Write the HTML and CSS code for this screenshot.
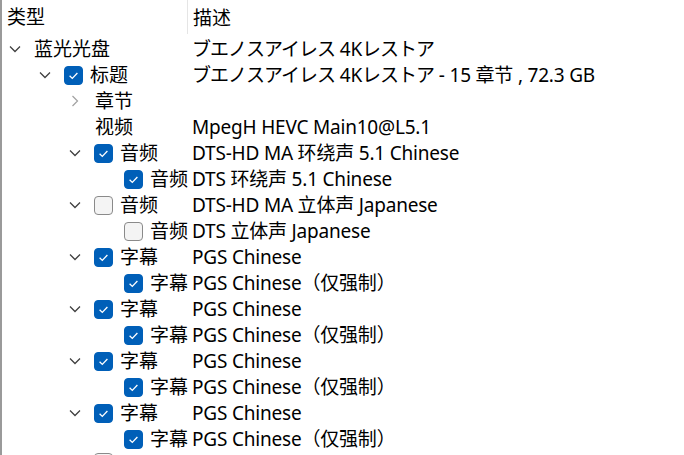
FILE: index.html
```html
<!DOCTYPE html>
<html lang="zh">
<head>
<meta charset="utf-8">
<link rel="stylesheet" href="styles.css">
</head>
<body>
<div class="view">
  <div class="header">
    <div class="hcell tree-col">类型</div>
    <div class="hcell desc-col">描述</div>
  </div>

  <div class="row l0">
    <div class="tree"><span class="chev down"><svg viewBox="0 0 12 8"><path d="M1 1.5 L6 6.5 L11 1.5"/></svg></span><span class="label">蓝光光盘</span></div>
    <div class="desc"><span class="kana">ブエノスアイレス</span> 4K<span class="kana">レストア</span></div>
  </div>
  <div class="row l1">
    <div class="tree"><span class="chev down"><svg viewBox="0 0 12 8"><path d="M1 1.5 L6 6.5 L11 1.5"/></svg></span><span class="cb on"><svg viewBox="0 0 19 19"><path d="M5.6 9.8 L8.3 12.4 L13.4 7"/></svg></span><span class="label">标题</span></div>
    <div class="desc"><span class="kana">ブエノスアイレス</span> 4K<span class="kana">レストア</span> - 15 章节 , 72.3 GB</div>
  </div>
  <div class="row l2">
    <div class="tree"><span class="chev right"><svg viewBox="0 0 8 12"><path d="M1.5 1 L6.5 6 L1.5 11"/></svg></span><span class="label nocb">章节</span></div>
    <div class="desc"></div>
  </div>
  <div class="row l2">
    <div class="tree"><span class="chev"></span><span class="label nocb">视频</span></div>
    <div class="desc">MpegH HEVC Main10@L5.1</div>
  </div>
  <div class="row l2">
    <div class="tree"><span class="chev down"><svg viewBox="0 0 12 8"><path d="M1 1.5 L6 6.5 L11 1.5"/></svg></span><span class="cb on"><svg viewBox="0 0 19 19"><path d="M5.6 9.8 L8.3 12.4 L13.4 7"/></svg></span><span class="label">音频</span></div>
    <div class="desc">DTS-HD MA 环绕声 5.1 Chinese</div>
  </div>
  <div class="row l3">
    <div class="tree"><span class="chev"></span><span class="cb on"><svg viewBox="0 0 19 19"><path d="M5.6 9.8 L8.3 12.4 L13.4 7"/></svg></span><span class="label">音频</span></div>
    <div class="desc">DTS 环绕声 5.1 Chinese</div>
  </div>
  <div class="row l2">
    <div class="tree"><span class="chev down"><svg viewBox="0 0 12 8"><path d="M1 1.5 L6 6.5 L11 1.5"/></svg></span><span class="cb"></span><span class="label">音频</span></div>
    <div class="desc">DTS-HD MA 立体声 Japanese</div>
  </div>
  <div class="row l3">
    <div class="tree"><span class="chev"></span><span class="cb"></span><span class="label">音频</span></div>
    <div class="desc">DTS 立体声 Japanese</div>
  </div>

  <div class="row l2">
    <div class="tree"><span class="chev down"><svg viewBox="0 0 12 8"><path d="M1 1.5 L6 6.5 L11 1.5"/></svg></span><span class="cb on"><svg viewBox="0 0 19 19"><path d="M5.6 9.8 L8.3 12.4 L13.4 7"/></svg></span><span class="label">字幕</span></div>
    <div class="desc">PGS Chinese</div>
  </div>
  <div class="row l3">
    <div class="tree"><span class="chev"></span><span class="cb on"><svg viewBox="0 0 19 19"><path d="M5.6 9.8 L8.3 12.4 L13.4 7"/></svg></span><span class="label">字幕</span></div>
    <div class="desc">PGS Chinese（仅强制）</div>
  </div>
  <div class="row l2">
    <div class="tree"><span class="chev down"><svg viewBox="0 0 12 8"><path d="M1 1.5 L6 6.5 L11 1.5"/></svg></span><span class="cb on"><svg viewBox="0 0 19 19"><path d="M5.6 9.8 L8.3 12.4 L13.4 7"/></svg></span><span class="label">字幕</span></div>
    <div class="desc">PGS Chinese</div>
  </div>
  <div class="row l3">
    <div class="tree"><span class="chev"></span><span class="cb on"><svg viewBox="0 0 19 19"><path d="M5.6 9.8 L8.3 12.4 L13.4 7"/></svg></span><span class="label">字幕</span></div>
    <div class="desc">PGS Chinese（仅强制）</div>
  </div>
  <div class="row l2">
    <div class="tree"><span class="chev down"><svg viewBox="0 0 12 8"><path d="M1 1.5 L6 6.5 L11 1.5"/></svg></span><span class="cb on"><svg viewBox="0 0 19 19"><path d="M5.6 9.8 L8.3 12.4 L13.4 7"/></svg></span><span class="label">字幕</span></div>
    <div class="desc">PGS Chinese</div>
  </div>
  <div class="row l3">
    <div class="tree"><span class="chev"></span><span class="cb on"><svg viewBox="0 0 19 19"><path d="M5.6 9.8 L8.3 12.4 L13.4 7"/></svg></span><span class="label">字幕</span></div>
    <div class="desc">PGS Chinese（仅强制）</div>
  </div>
  <div class="row l2">
    <div class="tree"><span class="chev down"><svg viewBox="0 0 12 8"><path d="M1 1.5 L6 6.5 L11 1.5"/></svg></span><span class="cb on"><svg viewBox="0 0 19 19"><path d="M5.6 9.8 L8.3 12.4 L13.4 7"/></svg></span><span class="label">字幕</span></div>
    <div class="desc">PGS Chinese</div>
  </div>
  <div class="row l3">
    <div class="tree"><span class="chev"></span><span class="cb on"><svg viewBox="0 0 19 19"><path d="M5.6 9.8 L8.3 12.4 L13.4 7"/></svg></span><span class="label">字幕</span></div>
    <div class="desc">PGS Chinese（仅强制）</div>
  </div>
  <div class="row l2 partial">
    <div class="tree"><span class="chev"></span><span class="cb"></span></div>
    <div class="desc"></div>
  </div>
</div>
</body>
</html>
```
FILE: styles.css
```css
html, body {
  margin: 0;
  padding: 0;
  background: #ffffff;
  height: 100%;
  overflow: hidden;
}

.view {
  height: 455px;
  overflow: hidden;
  border-left: 2px solid #9a9a9a;
  font-family: "Noto Sans", "Noto Sans CJK SC", sans-serif;
  font-size: 19px;
  color: #000000;
  box-sizing: border-box;
}

.header {
  display: flex;
  height: 36px;
  align-items: stretch;
}

.hcell {
  display: flex;
  align-items: center;
  padding-bottom: 3px;
  box-sizing: border-box;
}

.tree-col {
  width: 186px;
  padding-left: 5px;
  border-right: 1px solid #e5e5e5;
  margin-bottom: 2px;
}

.desc-col {
  padding-left: 5px;
}

.row {
  display: flex;
  height: 26px;
  align-items: center;
}

.row.partial {
  margin-top: -3px;
}

.tree {
  width: 190px;
  flex: none;
  display: flex;
  align-items: center;
  box-sizing: border-box;
  white-space: nowrap;
}

.l0 .tree { padding-left: 3px; }
.l1 .tree { padding-left: 33px; }
.l2 .tree { padding-left: 63px; }
.l3 .tree { padding-left: 93px; }

.chev {
  width: 20px;
  height: 20px;
  flex: none;
  display: flex;
  align-items: center;
  justify-content: center;
}

.chev.down svg {
  width: 12px;
  height: 8px;
}

.chev.right svg {
  width: 8px;
  height: 12px;
}

.chev path {
  fill: none;
  stroke: #3f3f3f;
  stroke-width: 1.25;
}

.chev.right path {
  stroke: #a3a3a3;
}

.cb {
  width: 19px;
  height: 19px;
  flex: none;
  box-sizing: border-box;
  margin-left: 9px;
  border-radius: 4px;
  border: 1px solid #8a8a8a;
  background: #f4f4f4;
  display: flex;
  align-items: center;
  justify-content: center;
}

.cb.on {
  background: #005fb8;
  border-color: #005fb8;
}

.cb svg {
  width: 19px;
  height: 19px;
  flex: none;
}

.cb path {
  fill: none;
  stroke: #ffffff;
  stroke-width: 1.3;
}

.label {
  margin-left: 7px;
  line-height: 26px;
}

.label.nocb {
  margin-left: 10px;
}

.l0 .label {
  margin-left: 9px;
}

.desc {
  padding-left: 0;
  white-space: nowrap;
  line-height: 26px;
  letter-spacing: -0.2px;
}

.kana {
  letter-spacing: -1px;
}
```
